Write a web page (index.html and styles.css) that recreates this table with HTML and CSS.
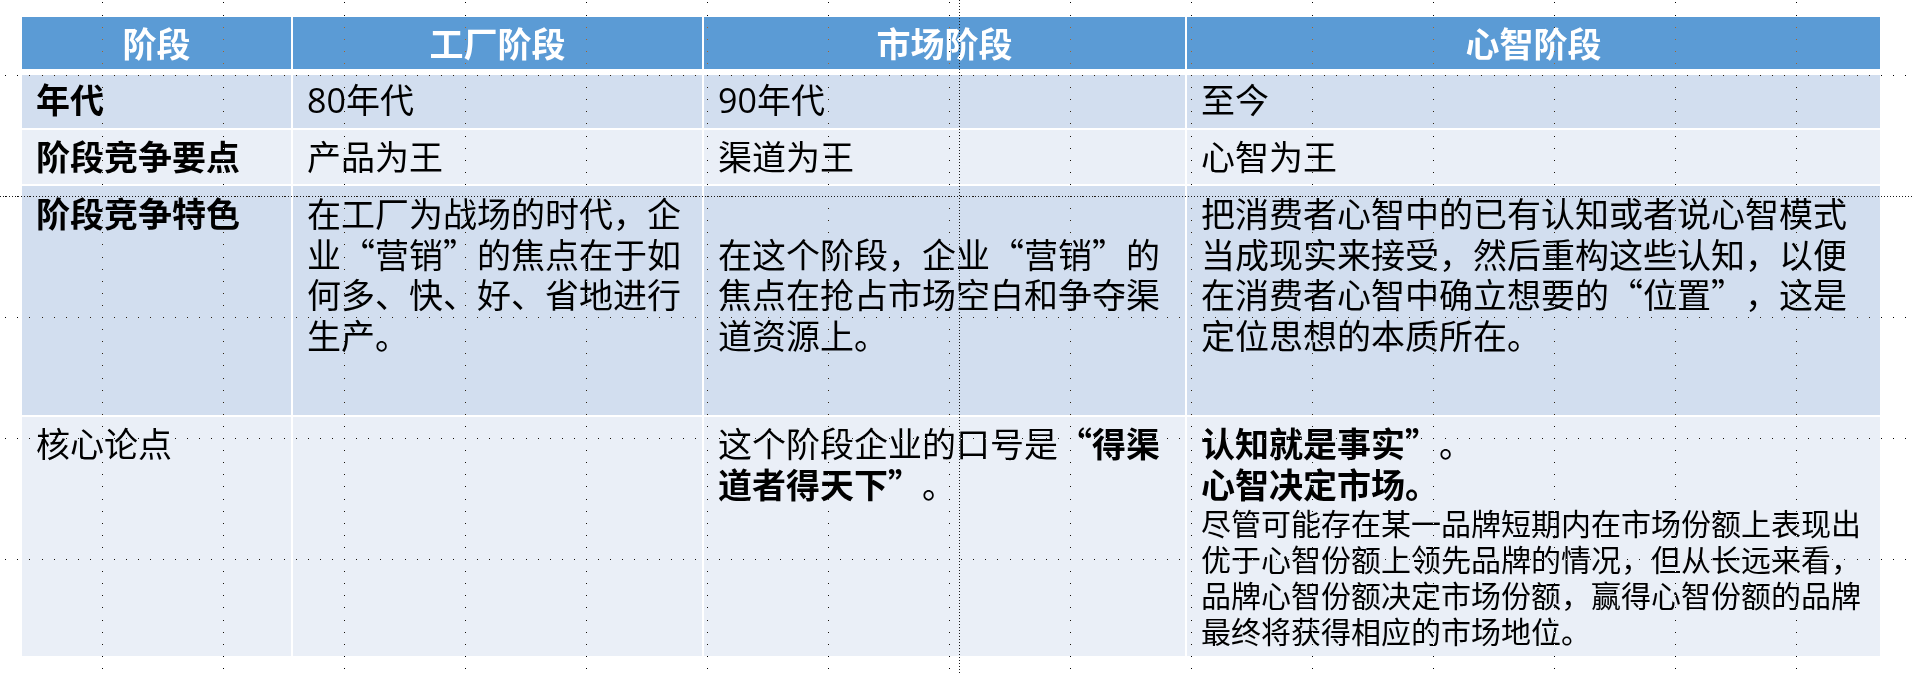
FILE: index.html
```html
<!DOCTYPE html>
<html lang="zh-CN">
<head>
<meta charset="utf-8">
<title>定位阶段对比</title>
<link rel="stylesheet" href="styles.css">
</head>
<body>
<div class="page">
  <div class="table">
    <div class="row head">
      <div class="cell">阶段</div>
      <div class="cell">工厂阶段</div>
      <div class="cell">市场阶段</div>
      <div class="cell">心智阶段</div>
    </div>
    <div class="row r1 band1">
      <div class="cell label">年代</div>
      <div class="cell"><span class="num">80</span>年代</div>
      <div class="cell"><span class="num">90</span>年代</div>
      <div class="cell">至今</div>
    </div>
    <div class="row r2 band2">
      <div class="cell label">阶段竞争要点</div>
      <div class="cell">产品为王</div>
      <div class="cell">渠道为王</div>
      <div class="cell">心智为王</div>
    </div>
    <div class="row r3 band1">
      <div class="cell label">阶段竞争特色</div>
      <div class="cell">在工厂为战场的时代，企业“营销”的焦点在于如何多、快、好、省地进行生产。</div>
      <div class="cell lead-gap">在这个阶段，企业“营销”的焦点在抢占市场空白和争夺渠道资源上。</div>
      <div class="cell">把消费者心智中的已有认知或者说心智模式当成现实来接受，然后重构这些认知，以便在消费者心智中确立想要的“位置”，这是定位思想的本质所在。</div>
    </div>
    <div class="row r4 band2">
      <div class="cell">核心论点</div>
      <div class="cell"></div>
      <div class="cell">
        <div class="line">这个阶段企业的口号是<b>“得渠</b></div>
        <div class="line"><b>道者得天下”</b>。</div>
      </div>
      <div class="cell">
        <div class="line"><b>认知就是事实”</b>。</div>
        <div class="line"><b>心智决定市场。</b></div>
        <div class="small">尽管可能存在某一品牌短期内在市场份额上表现出优于心智份额上领先品牌的情况，但从长远来看，品牌心智份额决定市场份额，赢得心智份额的品牌最终将获得相应的市场地位。</div>
      </div>
    </div>
  </div>

  <svg class="grid-layer" width="1914" height="674" viewBox="0 0 1914 674" shape-rendering="crispEdges" aria-hidden="true">
    <defs>
      <pattern id="gridDots" patternUnits="userSpaceOnUse" x="102" y="75" width="121" height="121">
        <rect x="0" y="0" width="1" height="1"/>
        <rect x="12" y="0" width="1" height="1"/>
        <rect x="24" y="0" width="1" height="1"/>
        <rect x="36" y="0" width="1" height="1"/>
        <rect x="48" y="0" width="1" height="1"/>
        <rect x="61" y="0" width="1" height="1"/>
        <rect x="73" y="0" width="1" height="1"/>
        <rect x="85" y="0" width="1" height="1"/>
        <rect x="97" y="0" width="1" height="1"/>
        <rect x="109" y="0" width="1" height="1"/>
        <rect x="0" y="12" width="1" height="1"/>
        <rect x="0" y="24" width="1" height="1"/>
        <rect x="0" y="36" width="1" height="1"/>
        <rect x="0" y="48" width="1" height="1"/>
        <rect x="0" y="61" width="1" height="1"/>
        <rect x="0" y="73" width="1" height="1"/>
        <rect x="0" y="85" width="1" height="1"/>
        <rect x="0" y="97" width="1" height="1"/>
        <rect x="0" y="109" width="1" height="1"/>
      </pattern>
    </defs>
    <rect class="dots" x="0" y="0" width="1914" height="674" fill="url(#gridDots)"/>
  </svg>

  <svg class="guide-layer" width="1914" height="674" viewBox="0 0 1914 674" shape-rendering="crispEdges" aria-hidden="true">
    <line class="guide" x1="0" y1="196.5" x2="1914" y2="196.5"/>
    <line class="guide" x1="959.5" y1="0" x2="959.5" y2="674"/>
  </svg>
</div>
</body>
</html>
```

FILE: styles.css
```css
html, body {
  margin: 0;
  padding: 0;
  background: #ffffff;
}

body {
  font-family: "Noto Sans CJK SC", "Noto Sans", sans-serif;
  color: #000000;
  text-spacing-trim: space-all;
}

.page {
  position: relative;
  width: 1914px;
  height: 674px;
  padding: 17px 0 0 22px;
  box-sizing: border-box;
  overflow: hidden;
}

.table {
  display: flex;
  flex-direction: column;
  gap: 2px;
  width: 1858px;
}

.row {
  display: grid;
  grid-template-columns: 269px 409px 481px 693px;
  column-gap: 2px;
}

.cell {
  font-size: 34px;
  line-height: 40.5px;
  padding: 0 14px;
  box-sizing: border-box;
}

.line {
  white-space: nowrap;
}

.head {
  height: 52px;
  margin-bottom: 4px;
}

.head .cell {
  background: #5b9bd5;
  color: #ffffff;
  font-weight: 700;
  display: flex;
  align-items: center;
  justify-content: center;
  line-height: 40px;
}

.band1 .cell {
  background: #d2deef;
}

.band2 .cell {
  background: #eaeff7;
}

.r1 { height: 53px; }
.r2 { height: 54px; }
.r3 { height: 229px; }
.r4 { height: 239px; }

.r1 .cell { padding-top: 4px; }
.r2 .cell { padding-top: 6px; }
.r3 .cell { padding-top: 7px; }
.r4 .cell { padding-top: 6px; }

.r3 .lead-gap {
  padding-top: 47.5px;
}

.label {
  font-weight: 700;
}

.num {
  font-family: "Open Sans", "Noto Sans", sans-serif;
}

b {
  font-weight: 700;
}

.small {
  font-size: 30px;
  line-height: 36px;
}

.grid-layer,
.guide-layer {
  position: absolute;
  left: 0;
  top: 0;
  pointer-events: none;
}

.grid-layer {
  mix-blend-mode: difference;
}

.grid-layer pattern rect {
  fill: #ffffff;
}

.guide {
  stroke: #1a1a1a;
  stroke-width: 1;
  stroke-dasharray: 1 2;
}
```
